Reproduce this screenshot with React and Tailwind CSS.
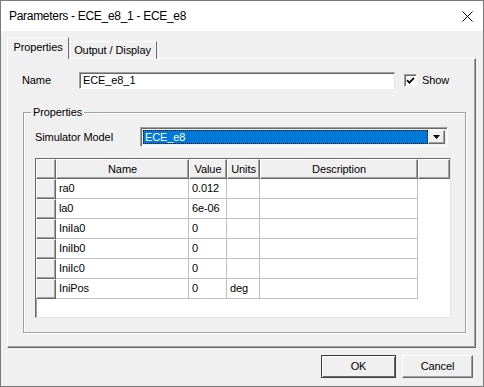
import React from 'react';

const rows = [
    { name: 'ra0', value: '0.012', units: '' },
    { name: 'la0', value: '6e-06', units: '' },
    { name: 'IniIa0', value: '0', units: '' },
    { name: 'IniIb0', value: '0', units: '' },
    { name: 'IniIc0', value: '0', units: '' },
    { name: 'IniPos', value: '0', units: 'deg' },
];

// raised 3d look used for header cells, row headers and buttons
const raised = 'bg-[#f0f0f0] border-t border-l border-white border-r border-b border-r-[#696969] border-b-[#696969] shadow-[inset_-1px_-1px_0_#a0a0a0]';

const HeaderCell = ({ w, children }) => (
    <div className={`${raised} ${w} h-[20px] flex items-center justify-center shrink-0`}>
        {children}
    </div>
);

const DataCell = ({ w, children }) => (
    <div className={`${w} h-[20px] flex items-center pl-[3px] border-r border-b border-[#c0c0c0] shrink-0`}>
        {children}
    </div>
);

const App = () => {
    return (
        <div className="w-[484px] h-[387px] flex flex-col bg-[#f0f0f0] border border-[#7a7a7a] font-['Liberation_Sans',Arial,sans-serif] text-[11px] tracking-[-0.1px] text-black leading-none">
            {/* title bar */}
            <div className="h-[30px] bg-white flex items-center pl-[8px] pr-[10px] shrink-0">
                <span className="flex-1 text-[12px] tracking-[-0.3px]">Parameters - ECE_e8_1 - ECE_e8</span>
                <svg width="11" height="11" viewBox="0 0 11 11" className="mt-[1px]">
                    <path d="M0.5 0.5 L10.5 10.5 M10.5 0.5 L0.5 10.5" stroke="#000" strokeWidth="1" fill="none" />
                </svg>
            </div>

            <div className="flex-1 flex flex-col pl-[6px] pr-[6px] pt-[7px]">
                {/* tabs */}
                <div className="flex items-end h-[21px] relative z-10 -mb-px">
                    <div className="w-[62px] h-[22px] bg-[#f0f0f0] border-t border-l border-white border-r border-r-[#696969] flex items-center justify-center pb-[3px]">
                        Properties
                    </div>
                    <div className="w-[88px] h-[18px] border-t border-white border-r border-r-[#696969] flex items-center justify-center">
                        Output / Display
                    </div>
                </div>

                {/* tab panel */}
                <div className="h-[290px] mr-px border-t border-l border-white border-r border-b border-r-[#696969] border-b-[#696969] shadow-[inset_-1px_-1px_0_#a0a0a0] flex flex-col">
                    <div className="flex items-center mt-[13px] pl-[14px] h-[17px]">
                        <span className="w-[57px]">Name</span>
                        <div className="w-[316px] h-[17px] bg-white border-t border-l border-[#a0a0a0] border-b border-r border-b-white border-r-[#e3e3e3] shadow-[inset_1px_1px_0_#696969] flex items-center pl-[3px]">
                            ECE_e8_1
                        </div>
                        <div className="ml-[9px] w-[13px] h-[13px] bg-white border border-[#a0a0a0] border-b-white border-r-white shadow-[inset_1px_1px_0_#696969] flex items-center justify-center">
                            <svg width="9" height="9" viewBox="0 0 9 9">
                                <path d="M1 4.2 L3.4 6.6 L8 1.8" stroke="#000" strokeWidth="1.8" fill="none" />
                            </svg>
                        </div>
                        <span className="ml-[5px]">Show</span>
                    </div>

                    {/* Properties group */}
                    <div className="relative mt-[23px] ml-[15px] mr-[9px] h-[221px] border border-[#a0a0a0] shadow-[inset_1px_1px_0_#ffffff,1px_1px_0_#ffffff] flex flex-col pl-[11px]">
                        <span className="absolute -top-[6px] left-[7px] px-[2px] bg-[#f0f0f0]">Properties</span>

                        <div className="flex items-center mt-[14px] h-[20px]">
                            <span className="w-[105px]">Simulator Model</span>
                            <div className="w-[308px] h-[20px] flex border-t border-l border-[#a0a0a0] border-b border-r border-b-white border-r-white shadow-[inset_1px_1px_0_#696969] p-[2px]">
                                <div className="flex-1 bg-[#0078d7] outline-1 outline-dotted outline-[#000] -outline-offset-1 text-white flex items-center pl-[2px]">
                                    ECE_e8
                                </div>
                                <div className={`${raised} w-[17px] flex items-center justify-center`}>
                                    <svg width="7" height="4" viewBox="0 0 7 4">
                                        <path d="M0 0 H7 L3.5 4 Z" fill="#000" />
                                    </svg>
                                </div>
                            </div>
                        </div>

                        {/* grid */}
                        <div className="mt-[11px] w-[416px] h-[160px] bg-white border-t border-l border-[#696969] border-b border-r border-b-[#e3e3e3] border-r-[#e3e3e3] shadow-[inset_1px_1px_0_#a0a0a0] flex flex-col overflow-hidden">
                            <div className="flex">
                                <HeaderCell w="w-[20px]" />
                                <HeaderCell w="w-[133px]">Name</HeaderCell>
                                <HeaderCell w="w-[38px]">Value</HeaderCell>
                                <HeaderCell w="w-[33px]">Units</HeaderCell>
                                <HeaderCell w="w-[158px]">Description</HeaderCell>
                                <HeaderCell w="w-[32px]" />
                            </div>
                            {rows.map((r) => (
                                <div key={r.name} className="flex">
                                    <div className={`${raised} w-[20px] h-[20px] shrink-0`} />
                                    <DataCell w="w-[133px]">{r.name}</DataCell>
                                    <DataCell w="w-[38px]">{r.value}</DataCell>
                                    <DataCell w="w-[33px]">{r.units}</DataCell>
                                    <DataCell w="w-[158px]" />
                                </div>
                            ))}
                        </div>
                    </div>
                </div>

                {/* buttons */}
                <div className="flex justify-end gap-[6px] mt-[7px] pr-[4px]">
                    <button className="w-[75px] h-[23px] bg-[#f0f0f0] border border-[#3c3c3c] shadow-[inset_1px_1px_0_#ffffff,inset_-1px_-1px_0_#696969] flex items-center justify-center">
                        OK
                    </button>
                    <button className={`${raised} w-[71px] h-[23px] flex items-center justify-center`}>
                        Cancel
                    </button>
                </div>
            </div>
        </div>
    );
};

export default App;
